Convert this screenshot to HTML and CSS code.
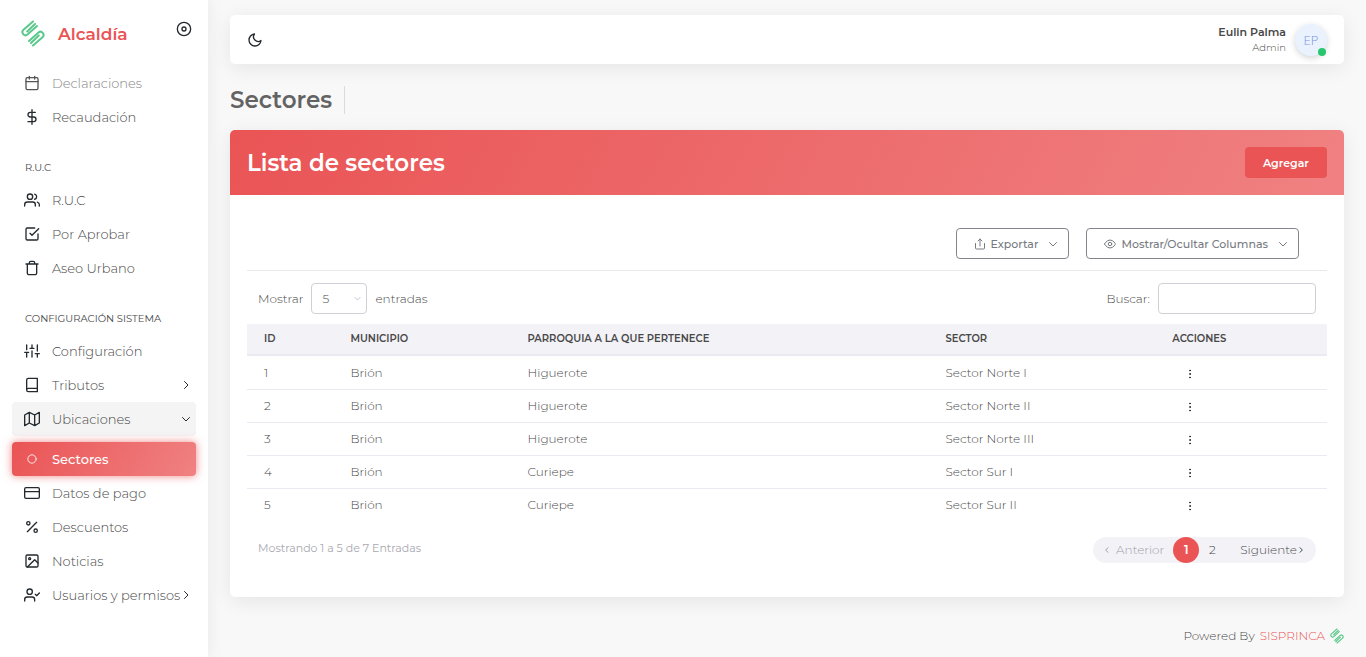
FILE: index.html
```html
<!DOCTYPE html>
<html lang="es">
<head>
<meta charset="utf-8">
<meta name="viewport" content="width=device-width, initial-scale=1">
<title>Sectores</title>
<link rel="stylesheet" href="styles.css">
</head>
<body>
<svg class="sprite" aria-hidden="true">
  <symbol id="logo" viewBox="0 0 24 27"><path d="M12 1.500 2.500 9.800C-.5 12.500 3.500 17 6.500 14.500L16 6M6.200 11.500 14 4M12 25.500 21.500 17.200C24.500 14.500 20.500 10 17.500 12.500L8 21M17.800 15.500 10 23"/></symbol>
  <symbol id="calendar" viewBox="0 0 24 24"><rect x="3" y="4" width="18" height="18" rx="2"/><path d="M16 2v4M8 2v4M3 10h18"/></symbol>
  <symbol id="dollar" viewBox="0 0 24 24"><path d="M12 1v22M17 5H9.500a3.500 3.500 0 0 0 0 7h5a3.500 3.500 0 0 1 0 7H6"/></symbol>
  <symbol id="users" viewBox="0 0 24 24"><path d="M17 21v-2a4 4 0 0 0-4-4H5a4 4 0 0 0-4 4v2M23 21v-2a4 4 0 0 0-3-3.870M16 3.130a4 4 0 0 1 0 7.750"/><circle cx="9" cy="7" r="4"/></symbol>
  <symbol id="check-square" viewBox="0 0 24 24"><path d="m9 11 3 3L22 4M21 12v7a2 2 0 0 1-2 2H5a2 2 0 0 1-2-2V5a2 2 0 0 1 2-2h11"/></symbol>
  <symbol id="trash" viewBox="0 0 24 24"><path d="M3 6h18M19 6v14a2 2 0 0 1-2 2H7a2 2 0 0 1-2-2V6m3 0V4a2 2 0 0 1 2-2h4a2 2 0 0 1 2 2v2"/></symbol>
  <symbol id="sliders" viewBox="0 0 24 24"><path d="M4 21v-7M4 10V3M12 21v-9M12 8V3M20 21v-5M20 12V3M1 14h6M9 8h6M17 16h6"/></symbol>
  <symbol id="book" viewBox="0 0 24 24"><path d="M4 19.500A2.500 2.500 0 0 1 6.500 17H20M6.500 2H20v20H6.500A2.500 2.500 0 0 1 4 19.500v-15A2.500 2.500 0 0 1 6.500 2z"/></symbol>
  <symbol id="map" viewBox="0 0 24 24"><path d="M1 6v16l7-4 8 4 7-4V2l-7 4-8-4-7 4zM8 2v16M16 6v16"/></symbol>
  <symbol id="circle" viewBox="0 0 24 24"><circle cx="12" cy="12" r="10"/></symbol>
  <symbol id="card" viewBox="0 0 24 24"><rect x="1" y="4" width="22" height="16" rx="2"/><path d="M1 10h22"/></symbol>
  <symbol id="percent" viewBox="0 0 24 24"><path d="M19 5 5 19"/><circle cx="6.500" cy="6.500" r="2.500"/><circle cx="17.500" cy="17.500" r="2.500"/></symbol>
  <symbol id="image" viewBox="0 0 24 24"><rect x="3" y="3" width="18" height="18" rx="2"/><circle cx="8.500" cy="8.500" r="1.500"/><path d="m21 15-5-5L5 21"/></symbol>
  <symbol id="user-check" viewBox="0 0 24 24"><path d="M16 21v-2a4 4 0 0 0-4-4H5a4 4 0 0 0-4 4v2M17 11l2 2 4-4"/><circle cx="8.500" cy="7" r="4"/></symbol>
  <symbol id="disc" viewBox="0 0 24 24"><circle cx="12" cy="12" r="10"/><circle cx="12" cy="12" r="3"/></symbol>
  <symbol id="moon" viewBox="0 0 24 24"><path d="M21 12.790A9 9 0 1 1 11.210 3 7 7 0 0 0 21 12.790z"/></symbol>
  <symbol id="share" viewBox="0 0 24 24"><path d="M3 11v9a2 2 0 0 0 2 2h14a2 2 0 0 0 2-2v-9M16 6l-4-4-4 4M12 2v14"/></symbol>
  <symbol id="eye" viewBox="0 0 24 24"><path d="M1 12s4-8 11-8 11 8 11 8-4 8-11 8-11-8-11-8z"/><circle cx="12" cy="12" r="3.500"/></symbol>
  <symbol id="down" viewBox="0 0 24 24"><path d="m5 9 7 7 7-7"/></symbol>
  <symbol id="right" viewBox="0 0 24 24"><path d="m9 19 7-7-7-7"/></symbol>
  <symbol id="left" viewBox="0 0 24 24"><path d="m15 19-7-7 7-7"/></symbol>
  <symbol id="dots" viewBox="0 0 24 24"><circle cx="12" cy="12" r="1"/><circle cx="12" cy="5" r="1"/><circle cx="12" cy="19" r="1"/></symbol>
</svg>
<div class="layout">
  <aside class="sidebar">
    <div class="brand">
      <a class="brand-link" href="#"><svg class="logo"><use href="#logo"/></svg><span>Alcaldía</span></a>
      <button class="icon-button" type="button" aria-label="Fijar menú"><svg class="icon"><use href="#disc"/></svg></button>
    </div>
    <nav class="menu" aria-label="Principal">
      <a class="item faded" href="#"><svg class="icon"><use href="#calendar"/></svg><span>Declaraciones</span></a>
      <a class="item" href="#"><svg class="icon"><use href="#dollar"/></svg><span>Recaudación</span></a>
      <div class="menu-heading">R.U.C</div>
      <a class="item" href="#"><svg class="icon"><use href="#users"/></svg><span>R.U.C</span></a>
      <a class="item" href="#"><svg class="icon"><use href="#check-square"/></svg><span>Por Aprobar</span></a>
      <a class="item" href="#"><svg class="icon"><use href="#trash"/></svg><span>Aseo Urbano</span></a>
      <div class="menu-heading">CONFIGURACIÓN SISTEMA</div>
      <a class="item" href="#"><svg class="icon"><use href="#sliders"/></svg><span>Configuración</span></a>
      <a class="item" href="#"><svg class="icon"><use href="#book"/></svg><span>Tributos</span><svg class="caret"><use href="#right"/></svg></a>
      <a class="item open" href="#"><svg class="icon"><use href="#map"/></svg><span>Ubicaciones</span><svg class="caret"><use href="#down"/></svg></a>
      <a class="item active" href="#" aria-current="page"><svg class="bullet"><use href="#circle"/></svg><span>Sectores</span></a>
      <a class="item" href="#"><svg class="icon"><use href="#card"/></svg><span>Datos de pago</span></a>
      <a class="item" href="#"><svg class="icon"><use href="#percent"/></svg><span>Descuentos</span></a>
      <a class="item" href="#"><svg class="icon"><use href="#image"/></svg><span>Noticias</span></a>
      <a class="item" href="#"><svg class="icon"><use href="#user-check"/></svg><span>Usuarios y permisos</span><svg class="caret"><use href="#right"/></svg></a>
    </nav>
  </aside>
  <div class="page">
    <header class="navbar">
      <button class="icon-button" type="button" aria-label="Modo oscuro"><svg class="icon"><use href="#moon"/></svg></button>
      <div class="user">
        <div class="user-text"><strong class="user-name">Eulin Palma</strong><span class="user-role">Admin</span></div>
        <div class="avatar">EP<span class="status"></span></div>
      </div>
    </header>
    <main>
      <div class="title-row"><h1 class="title">Sectores</h1></div>
      <section class="panel">
        <div class="panel-head"><h2 class="panel-title">Lista de sectores</h2><button class="add" type="button">Agregar</button></div>
        <div class="panel-body">
          <div class="tools">
            <button class="tool" type="button"><svg class="small"><use href="#share"/></svg><span>Exportar</span><svg class="small"><use href="#down"/></svg></button>
            <button class="tool" type="button"><svg class="small"><use href="#eye"/></svg><span>Mostrar/Ocultar Columnas</span><svg class="small"><use href="#down"/></svg></button>
          </div>
          <div class="filters">
            <div class="field">
              <label for="length">Mostrar</label>
              <span class="select-wrap"><select class="control length" id="length"><option>5</option><option>10</option><option>25</option></select><svg class="select-arrow"><use href="#down"/></svg></span>
              <span>entradas</span>
            </div>
            <div class="field"><label for="search">Buscar:</label><input class="control search" id="search" type="search"></div>
          </div>
          <table class="grid">
            <colgroup><col class="col-id"><col class="col-town"><col class="col-parish"><col class="col-sector"><col></colgroup>
            <thead><tr><th>ID</th><th>MUNICIPIO</th><th>PARROQUIA A LA QUE PERTENECE</th><th>SECTOR</th><th>ACCIONES</th></tr></thead>
            <tbody>
              <tr><td>1</td><td>Brión</td><td>Higuerote</td><td>Sector Norte I</td><td><button class="more" type="button" aria-label="Acciones 1"><svg class="small"><use href="#dots"/></svg></button></td></tr>
              <tr><td>2</td><td>Brión</td><td>Higuerote</td><td>Sector Norte II</td><td><button class="more" type="button" aria-label="Acciones 2"><svg class="small"><use href="#dots"/></svg></button></td></tr>
              <tr><td>3</td><td>Brión</td><td>Higuerote</td><td>Sector Norte III</td><td><button class="more" type="button" aria-label="Acciones 3"><svg class="small"><use href="#dots"/></svg></button></td></tr>
              <tr><td>4</td><td>Brión</td><td>Curiepe</td><td>Sector Sur I</td><td><button class="more" type="button" aria-label="Acciones 4"><svg class="small"><use href="#dots"/></svg></button></td></tr>
              <tr><td>5</td><td>Brión</td><td>Curiepe</td><td>Sector Sur II</td><td><button class="more" type="button" aria-label="Acciones 5"><svg class="small"><use href="#dots"/></svg></button></td></tr>
            </tbody>
          </table>
          <div class="summary">
            <span class="count">Mostrando 1 a 5 de 7 Entradas</span>
            <nav class="pages" aria-label="Paginación">
              <button class="prev" type="button" disabled><svg class="tiny"><use href="#left"/></svg>Anterior</button>
              <a class="number current" href="#" aria-current="page">1</a>
              <a class="number" href="#">2</a>
              <a class="next" href="#">Siguiente<svg class="tiny"><use href="#right"/></svg></a>
            </nav>
          </div>
        </div>
      </section>
    </main>
    <footer class="footer"><span>Powered By</span><a class="vendor" href="#">SISPRINCA</a><svg class="logo logo-small"><use href="#logo"/></svg></footer>
  </div>
</div>
</body>
</html>
```

FILE: styles.css
```css
* { box-sizing: border-box; }
body {
  margin: 0;
  background: #f8f8f8;
  color: #484848;
  font: 300 12px/18px Montserrat, Inter, "Open Sans", sans-serif;
}
a { color: inherit; text-decoration: none; }
button, input, select { font: inherit; color: inherit; margin: 0; }
button { cursor: pointer; padding: 0; border: 0; background: none; }
svg { fill: none; stroke: currentColor; stroke-width: 2; stroke-linecap: round; stroke-linejoin: round; flex: none; display: block; }
.sprite { display: none; }
.layout { display: flex; min-height: 100vh; }

.sidebar {
  flex: 0 0 208px;
  min-width: 0;
  padding: 0 12px 24px;
  background: #fff;
  box-shadow: 0 0 15px rgba(34, 41, 47, .08);
}
.brand { display: flex; justify-content: space-between; height: 66px; padding: 20px 4px 0 9px; }
.brand-link { display: flex; gap: 13px; height: 27px; align-items: center; color: #ea5455; font-size: 17px; font-weight: 600; }
.logo { width: 24px; height: 27px; color: #5ac88b; }
.icon-button { display: flex; align-items: center; height: 18px; color: #22292f; }
.icon { width: 16px; height: 16px; color: #22292f; }
.item {
  display: flex;
  align-items: center;
  gap: 12px;
  height: 34px;
  padding: 0 4px 0 12px;
  border-radius: 4px;
  font-size: 13px;
  white-space: nowrap;
}
.item span { flex: 1; min-width: 0; }
.caret { width: 12px; height: 12px; margin-left: -12px; color: #22292f; }
.faded { color: #858585; }
.faded .icon { color: #555; }
.open { background: #f4f4f4; }
.active {
  margin-top: 6px;
  gap: 15px;
  padding-left: 15px;
  color: #fff;
  font-weight: 500;
  background: linear-gradient(118deg, #ea5455, #f08182);
  box-shadow: 0 0 8px rgba(234, 84, 85, .7);
}
.bullet { width: 10px; height: 10px; }
.menu-heading { height: 49px; padding: 27px 12px 0 13px; font-size: 10px; font-weight: 400; line-height: 14px; }

.page { flex: 1; min-width: 0; padding: 15px 22px 12px; }
.navbar {
  display: flex;
  align-items: center;
  justify-content: space-between;
  height: 49px;
  padding: 0 17px;
  border-radius: 5px;
  background: #fff;
  box-shadow: 0 4px 20px rgba(0, 0, 0, .08);
}
.user { display: flex; align-items: center; gap: 9px; }
.user-text { display: flex; flex-direction: column; text-align: right; line-height: 16px; }
.user-name { font-size: 11px; font-weight: 600; }
.user-role { font-size: 10px; }
.avatar {
  position: relative;
  width: 32px;
  height: 32px;
  border-radius: 50%;
  background: #e9f2fd;
  box-shadow: 0 2px 6px rgba(34, 41, 47, .2);
  color: #7b93e6;
  font: 300 13px/32px "Open Sans", "Noto Sans", sans-serif;
  text-align: center;
}
.status { position: absolute; right: 1px; bottom: 0; width: 8px; height: 8px; border-radius: 50%; background: #28c76f; }

.title-row { display: flex; align-items: center; height: 66px; padding-top: 6px; }
.title { margin: 0; padding-right: 12px; border-right: 1px solid #d6dce1; font-size: 23px; font-weight: 600; line-height: 28px; color: #636363; }
.panel { border-radius: 5px; background: #fff; box-shadow: 0 4px 20px rgba(0, 0, 0, .08); }
.panel-head {
  display: flex;
  align-items: center;
  justify-content: space-between;
  height: 65px;
  padding: 0 17px;
  border-radius: 5px 5px 0 0;
  color: #fff;
  background: linear-gradient(118deg, #ea5455, #f08182);
}
.panel-title { margin: 0; font-size: 23px; font-weight: 600; line-height: 28px; }
.add { height: 31px; padding: 0 18px; border-radius: 4px; background: #ea5455; font-size: 11px; font-weight: 600; }
.panel-body { padding: 33px 17px 34px; }
.tools { display: flex; justify-content: flex-end; gap: 17px; padding: 0 28px 11px; border-bottom: 1px solid #e8e8ed; }
.tool {
  display: flex;
  align-items: center;
  height: 31px;
  padding: 0 9px 0 17px;
  border: 1px solid #82868b;
  border-radius: 4px;
  color: #777b80;
  font-size: 11px;
  font-weight: 500;
}
.tool span { margin: 0 9px 0 5px; }
.small { width: 12px; height: 12px; }
.filters { display: flex; justify-content: space-between; padding: 12px 11px 10px; }
.field { display: flex; align-items: center; gap: 8px; }
.control { height: 31px; border: 1px solid #d0d0d6; border-radius: 4px; background: #fff; appearance: none; }
.select-wrap { position: relative; display: flex; }
.length { width: 56px; padding: 0 10px; }
.select-arrow { position: absolute; right: 5px; top: 11px; width: 9px; height: 9px; color: #b0b0b8; pointer-events: none; }
.search { width: 158px; padding: 0 10px; }
.grid { width: 100%; border-collapse: separate; border-spacing: 0; table-layout: fixed; }
.col-id { width: 8%; }
.col-town { width: 16.4%; }
.col-parish { width: 38.7%; }
.col-sector { width: 21%; }
.grid th { height: 32px; padding: 0 17px; text-align: left; font-size: 10px; font-weight: 600; line-height: 14px; background: #f3f2f7; border-bottom: 2px solid #ebe9f1; }
.grid td { height: 33px; padding: 0 17px; }
.grid tr + tr td { border-top: 1px solid #ebe9f1; }
.more { display: block; padding: 2px 11px 0 12px; color: #22292f; }
.summary { display: flex; align-items: flex-start; justify-content: space-between; padding: 16px 11px 0; }
.count { padding-top: 2px; color: #a8a8b0; font-size: 11px; font-weight: 400; }
.pages { display: flex; height: 26px; border-radius: 13px; background: #f3f2f7; line-height: 26px; }
.pages > * { display: flex; align-items: center; }
.prev { padding: 0 9px 0 10px; gap: 5px; color: #a0a0a8; }
.number { width: 26px; justify-content: center; border-radius: 50%; }
.current { color: #fff; background: #ea5455; font-weight: 600; }
.next { padding: 0 11px 0 15px; }
.tiny { width: 8px; height: 8px; stroke-width: 3; }
.footer { display: flex; justify-content: flex-end; align-items: center; gap: 5px; padding-top: 30px; }
.vendor { color: #ea5455; }
.logo-small { width: 14px; height: 16px; }
```
